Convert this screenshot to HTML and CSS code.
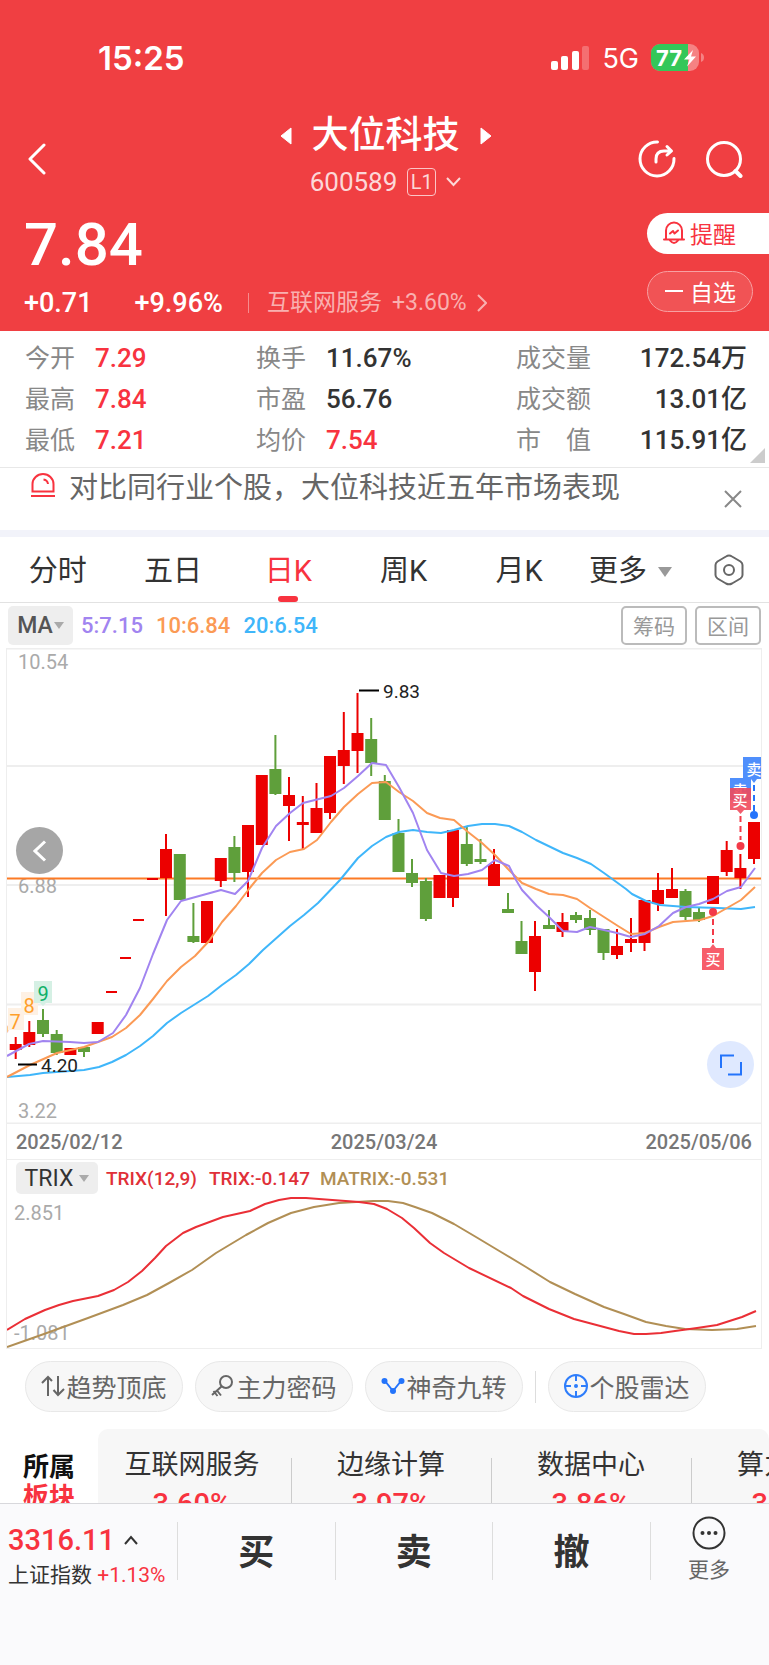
FILE: index.html
```html
<!DOCTYPE html>
<html lang="zh-CN">
<head>
  <meta charset="UTF-8">
  <meta name="viewport" content="width=device-width, initial-scale=1">
  <title>大位科技 600589</title>
  <link rel="stylesheet" href="styles.css">
</head>
<body>
  <main class="main">
    <header class="header">
      <div class="status">
        <span class="status-time">15:25</span>
        <div class="status-right">
          <svg class="signal" width="39" height="26" viewBox="0 0 39 26" fill="#fff">
            <rect x="0" y="16" width="7" height="9" rx="2"/>
            <rect x="10" y="11" width="7" height="14" rx="2"/>
            <rect x="21" y="6" width="7" height="19" rx="2"/>
            <rect x="31" y="1" width="7" height="24" rx="2" opacity=".25"/>
          </svg>
          <span class="network">5G</span>
          <svg width="54" height="28" viewBox="0 0 54 28">
            <defs><clipPath id="level"><rect x="0" y="0" width="37" height="28"/></clipPath></defs>
            <rect x="0" y="0" width="48" height="27" rx="9" fill="#f58283"/>
            <rect x="0" y="0" width="48" height="27" rx="9" fill="#34c759" clip-path="url(#level)"/>
            <path d="M50 9q3 1 3 4.500t-3 4.500z" fill="#f58283"/>
            <text class="battery-num" x="5" y="22">77</text>
            <path d="M42 6L33 15.500h5.500L36 22.500L45 12.500h-5z" fill="#fff"/>
          </svg>
        </div>
      </div>

      <nav class="navbar">
        <a class="back" href="#" aria-label="返回">
          <svg width="18" height="32" viewBox="0 0 18 32"><path d="M16 2L2 16l14 14" fill="none" stroke="#fff" stroke-width="3" stroke-linecap="round" stroke-linejoin="round"/></svg>
        </a>
        <div class="stock">
          <div class="stock-name">
            <svg width="12" height="18" viewBox="0 0 12 18"><path d="M11 1v16L1 9z" fill="#fff" stroke="#fff" stroke-linejoin="round"/></svg>
            <h1>大位科技</h1>
            <svg width="12" height="18" viewBox="0 0 12 18"><path d="M1 1v16L11 9z" fill="#fff" stroke="#fff" stroke-linejoin="round"/></svg>
          </div>
          <div class="stock-code">
            <span>600589</span>
            <span class="level">L1</span>
            <svg width="15" height="10" viewBox="0 0 15 10"><path d="M1 1l6.500 7L14 1" fill="none" stroke="#fcd8d8" stroke-width="2"/></svg>
          </div>
        </div>
        <div class="nav-icons">
          <a href="#" aria-label="分享">
            <svg width="38" height="38" viewBox="0 0 38 38" fill="none" stroke="#fff" stroke-width="3" stroke-linecap="round" stroke-linejoin="round">
              <path d="M19.500 2A17 17 0 1 0 36 18.500"/>
              <path d="M18 22v-3Q18 11 26 11h7M29 6.500l4.500 4.500L29 15"/>
            </svg>
          </a>
          <a href="#" aria-label="搜索">
            <svg width="38" height="38" viewBox="0 0 38 38" fill="none" stroke="#fff" stroke-width="3" stroke-linecap="round">
              <circle cx="19" cy="19" r="16.500"/>
              <path d="M30.500 31l5 5" stroke-width="4"/>
            </svg>
          </a>
        </div>
      </nav>

      <section class="quote">
        <div>
          <div class="price">7.84</div>
          <div class="change">
            <span class="change-num">+0.71</span>
            <span class="change-num">+9.96%</span>
            <a class="industry" href="#">
              <span>互联网服务</span>
              <span>+3.60%</span>
              <svg width="10" height="18" viewBox="0 0 10 18"><path d="M1 1l8 8-8 8" fill="none" stroke="#f9b0b0" stroke-width="2"/></svg>
            </a>
          </div>
        </div>
        <div class="quote-actions">
          <button class="remind" type="button">
            <svg width="22" height="24" viewBox="0 0 22 24" fill="none" stroke="#f8333f" stroke-width="2" stroke-linecap="round" stroke-linejoin="round">
              <path d="M1 18.500h20M3 18V9.500a8 8 0 0 1 16 0V18M7 19.500q4 5 8 0"/>
              <path d="M7 12.500l3-2.500 1.500 2.500L15 9.500"/>
            </svg>
            提醒
          </button>
          <button class="watch" type="button">
            <svg width="18" height="4" viewBox="0 0 18 4"><path d="M0 2h18" stroke="#fff" stroke-width="2"/></svg>
            自选
          </button>
        </div>
      </section>
    </header>

    <section class="stats">
      <dl>
        <dt>今开</dt><dd class="up">7.29</dd>
        <dt>最高</dt><dd class="up">7.84</dd>
        <dt>最低</dt><dd class="up">7.21</dd>
      </dl>
      <dl>
        <dt>换手</dt><dd>11.67%</dd>
        <dt>市盈</dt><dd>56.76</dd>
        <dt>均价</dt><dd class="up">7.54</dd>
      </dl>
      <dl class="stats-right">
        <dt>成交量</dt><dd>172.54万</dd>
        <dt>成交额</dt><dd>13.01亿</dd>
        <dt>市　值</dt><dd>115.91亿</dd>
      </dl>
    </section>

    <section class="notice">
      <svg class="notice-icon" width="24" height="24" viewBox="0 0 24 24" fill="none" stroke="#f8333f" stroke-width="2">
        <path d="M1.500 18.500V11a10.500 10 0 0 1 21 0v7.500zM0 23h24"/>
        <path d="M12.500 6.500q4 .5 4.500 4.500"/>
      </svg>
      <p>对比同行业个股，大位科技近五年市场表现</p>
      <button class="close" type="button" aria-label="关闭">
        <svg width="18" height="18" viewBox="0 0 18 18"><path d="M1 1l16 16M17 1L1 17" stroke="#888" stroke-width="2"/></svg>
      </button>
    </section>

    <nav class="tabs">
      <a href="#">分时</a>
      <a href="#">五日</a>
      <a class="on" href="#">日K</a>
      <a href="#">周K</a>
      <a href="#">月K</a>
      <a class="tab-more" href="#">更多<i class="caret"></i></a>
      <a class="setting" href="#" aria-label="设置">
        <svg width="30" height="32" viewBox="0 0 30 32" fill="none" stroke="#666" stroke-width="2" stroke-linejoin="round">
          <path d="M15 1.500q1.500 0 3 1l8.500 5Q28.500 9 28.500 11v10q0 2-2 3.500l-8.500 5q-3 1.500-6 0l-8.500-5Q1.500 23 1.500 21V11q0-2 2-3.500l8.500-5q1.500-1 3-1z"/>
          <circle cx="15" cy="16" r="5"/>
        </svg>
      </a>
    </nav>

    <section class="ma-bar">
      <button class="chip" type="button">MA<i class="caret"></i></button>
      <span class="ma5">5:7.15</span>
      <span class="ma10">10:6.84</span>
      <span class="ma20">20:6.54</span>
      <button class="outline" type="button">筹码</button>
      <button class="outline" type="button">区间</button>
    </section>

    <section class="chart">
      <div class="kline">
        <svg viewBox="7 648 754 476">
          <path class="grid" d="M7 648.500h754M7 766h754M7 885h754M7 1004.500h754M7 1123.500h754"/>
          <g class="axis">
            <text x="18" y="669">10.54</text>
            <text x="18" y="893">6.88</text>
            <text x="18" y="1118">3.22</text>
          </g>
          <path class="price-line" d="M7 878.500h754"/>

          <!-- 神奇九转 -->
          <g class="nine">
            <text x="4" y="1034" fill="#fcc98a">6</text>
            <rect x="8" y="1008" width="16" height="22" fill="#fef1e4"/>
            <text x="15" y="1029" fill="#ff9f2a">7</text>
            <rect x="21" y="992" width="17" height="23" fill="#fef1e4"/>
            <text x="29" y="1013" fill="#ff9f2a">8</text>
            <path d="M34 981h18v22h-6l-3 3-3-3h-6z" fill="#d5f0e4"/>
            <text x="43" y="1001" fill="#10b068">9</text>
          </g>

          <!-- 阳线 -->
          <path class="wick up-line" d="M15.700 1037V1059M29.300 1021V1047M166 834V916M220.800 858V887M248 825V897M289 777V841M302.800 796V849M316.500 783V833M330 756V819M343.800 712V784M357.500 693V773M453 830V907M494 849V886M535 921V991M562.500 913V937M617 929V959M631 918V952M644.500 900V951M658 873V911M672 868V898M726.700 841V876M740.400 854V889M754 822V864"/>
          <path class="body up-line" d="M15.700 1044V1050M29.300 1032V1045M70.400 1048V1055M97.700 1022V1034M166 849V878M207 901V943M220.800 858V881M248 825V872M261.800 775V845M289 795V806M302.800 822V825M316.500 808V833M330 756V813M343.800 750V766M357.500 733V751M439.500 875V898M453 830V898M494 864V886M535 936V972M562.500 922V932M617 946V955M631 939V943M644.500 900V943M658 890V904M672 889V898M713 876V904M726.700 850V872M740.400 868V878M754 822V859"/>
          <path class="limit up-line" d="M106 992h11M120 958h11M133 920h11M147 879h11"/>
          <!-- 阴线 -->
          <path class="wick down-line" d="M43 1009V1037M56.700 1030V1055M84 1048V1057M193.400 903V943M234.400 836V882M275.400 735V795M371.200 718V776M384.800 775V820M398.500 819V872M412 859V887M425.900 878V921M466.800 827V866M480.500 839V864M508 893V913M521.500 921V954M549 910V929M576 912V923M590 910V935M603.500 929V960M685.500 889V920M699 908V922"/>
          <path class="body down-line" d="M43 1020V1034M56.700 1034V1053M84 1047V1052M179.800 854V900M193.400 936V942M234.400 847V873M275.400 769V794M371.200 739V763M384.800 781V820M398.500 833V872M412 873V883M425.900 881V919M466.800 844V864M480.500 859V862M508 909V913M521.500 941V954M549 925V929M576 915V920M590 918V930M603.500 929V953M685.500 891V917M699 912V920"/>

          <polyline class="line" stroke="#3fb6fa" points="7,1077 30,1075 43,1073 84,1070 99,1067 112,1062 126,1055 140,1046 153,1036 167,1023 181,1013 208,996 222,985 236,975 249,964 263,950 290,926 304,915 318,903 340,880 358,858 372,846 386,837 399,832 413,830 427,832 441,833 454,830 468,826 482,824 495,824 509,826 522,832 536,840 563,853 577,858 591,864 604,873 626,889 632,894 646,901 660,905 686,907 718,908 741,909 755,907"/>
          <polyline class="line" stroke="#fb9a55" points="7,1077 30,1065 57,1053 84,1047 112,1037 126,1028 140,1015 153,999 167,981 181,967 195,956 209,941 222,922 236,906 249,889 262,873 276,860 290,852 304,849 317,840 331,822 344,807 358,794 372,783 386,782 399,792 413,801 427,813 440,818 454,820 468,832 482,843 495,855 508,869 522,883 536,889 549,894 563,895 577,899 590,908 604,917 618,926 631,934 645,933 659,927 673,922 700,920 713,916 727,908 741,900 755,887"/>
          <polyline class="line" stroke="#a184f0" points="7,1056 29,1044 43,1041 70,1042 84,1043 98,1042 113,1033 126,1015 140,988 153,954 167,920 181,901 221,890 235,894 248,881 262,848 276,826 290,813 303,803 331,796 344,788 358,776 372,763 386,765 399,787 413,813 427,850 441,873 454,876 468,874 482,870 495,860 509,866 516,880 522,890 537,906 549,917 563,931 577,932 590,927 604,930 617,933 631,937 645,934 659,926 673,913 686,907 699,904 713,899 727,891 741,887 755,868"/>

          <path class="mark" d="M359 690.500h20M18 1064.500h19"/>
          <text class="mark-text" x="383" y="698">9.83</text>
          <text class="mark-text" x="41" y="1072">4.20</text>

          <!-- 买卖点 -->
          <path class="dash" stroke="#2474fb" d="M754 785V811"/>
          <circle cx="754" cy="815" r="4" fill="#2474fb"/>
          <path d="M743 757h18v22h-4l-3 4-3-4h-8z" fill="#4f8ffc"/>
          <text class="trade" x="754" y="775">卖</text>
          <path d="M730 778h21v22h-21z" fill="#4f8ffc"/>
          <text class="trade" x="740" y="796">卖</text>
          <path d="M730 788h21v22h-7l-3.500 4-3.500-4h-7z" fill="#f04a5c" opacity=".9"/>
          <text class="trade" x="740" y="806">买</text>
          <path class="dash" stroke="#f33a48" d="M740.500 816V840"/>
          <circle cx="740.500" cy="846" r="4" fill="#f33a48"/>
          <circle cx="713" cy="912" r="4" fill="#f33a48"/>
          <path class="dash" stroke="#f33a48" d="M713 919V943"/>
          <path d="M702 948h8l3-4 3 4h8v22h-22z" fill="#f75d6a"/>
          <text class="trade" x="713" y="965">买</text>
        </svg>
        <button class="round prev" type="button" aria-label="向前">
          <svg width="14" height="22" viewBox="0 0 14 22"><path d="M12 1.500L2 11l10 9.500" fill="none" stroke="#fff" stroke-width="3"/></svg>
        </button>
        <button class="round full" type="button" aria-label="全屏">
          <svg width="22" height="22" viewBox="0 0 22 22"><path d="M1 14V1.500h13M21 8v12.500H8" fill="none" stroke="#2474fb" stroke-width="2"/></svg>
        </button>
      </div>

      <div class="dates">
        <span>2025/02/12</span>
        <span>2025/03/24</span>
        <span>2025/05/06</span>
      </div>

      <div class="trix-bar">
        <button class="chip chip-small" type="button">TRIX<i class="caret"></i></button>
        <span>TRIX(12,9)</span>
        <span class="trix-num">TRIX:-0.147</span>
        <span class="matrix">MATRIX:-0.531</span>
      </div>
      <svg class="trix" viewBox="7 1196 754 152">
        <g class="axis">
          <text x="14" y="1220">2.851</text>
          <text x="14" y="1340">-1.081</text>
        </g>
        <polyline class="line" stroke="#b18f55" points="7,1347 27,1340 44,1334 88,1318 123,1305 147,1295 169,1283 192,1270 216,1253 246,1235 268,1223 291,1213 314,1207 339,1203 356,1202 373,1201 388,1201 403,1203 415,1207 432,1213 454,1224 476,1237 501,1252 526,1267 550,1282 575,1294 604,1307 624,1314 646,1322 666,1326 685,1329 712,1330 737,1329 756,1326"/>
        <polyline class="line" stroke="#ea2f36" points="7,1330 25,1319 45,1310 59,1305 73,1301 98,1296 114,1290 128,1282 142,1271 155,1258 166,1246 183,1233 196,1227 223,1217 250,1211 265,1204 279,1200 291,1198 306,1198 319,1199 359,1202 374,1204 387,1209 402,1218 414,1228 430,1243 444,1253 469,1268 511,1288 523,1296 549,1309 574,1319 589,1323 619,1331 634,1334 646,1334 661,1333 675,1331 697,1328 717,1325 742,1317 756,1311"/>
      </svg>
    </section>

    <section class="tools">
      <button type="button">
        <svg width="24" height="22" viewBox="0 0 24 22" fill="none" stroke="#666" stroke-width="2">
          <path d="M7 21V2M1 8l6-6 4 4M17 1v18M12.500 15l4.500 5 6-6"/>
        </svg>趋势顶底
      </button>
      <button type="button">
        <svg width="24" height="24" viewBox="0 0 24 24" fill="none" stroke="#666" stroke-width="2">
          <circle cx="15" cy="8" r="6"/>
          <path d="M10.500 12.500L1 21M6 16.500l4 5M2.500 17l4 5"/>
        </svg>主力密码
      </button>
      <button type="button">
        <svg width="24" height="18" viewBox="0 0 24 18">
          <path d="M4 4l8 10 8-10" fill="none" stroke="#2474fb" stroke-width="2"/>
          <g fill="#2474fb"><circle cx="3.500" cy="4" r="3"/><circle cx="12" cy="14" r="3"/><circle cx="20.500" cy="4" r="3"/></g>
        </svg>神奇九转
      </button>
      <i class="tools-line"></i>
      <button type="button">
        <svg width="24" height="24" viewBox="0 0 24 24" fill="none" stroke="#2e7dfb" stroke-width="2">
          <circle cx="12" cy="12" r="11"/>
          <path d="M12 1v6M12 17v6M1 12h6M17 12h6"/>
          <circle cx="12" cy="12" r="2" fill="#2e7dfb" stroke="none"/>
        </svg>个股雷达
      </button>
    </section>

    <section class="sector">
      <h2>所属<br><em>板块</em></h2>
      <div class="sector-list">
        <a href="#">互联网服务<b>3.60%</b></a>
        <a href="#">边缘计算<b>3.97%</b></a>
        <a href="#">数据中心<b>3.86%</b></a>
        <a href="#">算力概念<b>3.21%</b></a>
      </div>
    </section>
  </main>

  <footer class="footer">
    <a class="index" href="#">
      <span class="index-num">3316.11
        <svg width="14" height="10" viewBox="0 0 14 10"><path d="M1 9l6-7 6 7" fill="none" stroke="#333" stroke-width="2"/></svg>
      </span>
      <span class="index-name">上证指数 <span class="up">+1.13%</span></span>
    </a>
    <button class="trade-btn" type="button">买</button>
    <button class="trade-btn" type="button">卖</button>
    <button class="trade-btn" type="button">撤</button>
    <a class="more" href="#">
      <svg width="34" height="34" viewBox="0 0 34 34">
        <circle cx="17" cy="17" r="15.500" fill="none" stroke="#333" stroke-width="2"/>
        <g fill="#333"><circle cx="10.500" cy="17" r="2"/><circle cx="17" cy="17" r="2"/><circle cx="23.500" cy="17" r="2"/></g>
      </svg>
      更多
    </a>
  </footer>
</body>
</html>
```

FILE: styles.css
```css
*{margin: 0;padding: 0;box-sizing: border-box}
body{
  display: flex;
  flex-direction: column;
  height: 100vh;
  background: #fff;
  color: #333;
  font-family: Roboto, "Noto Sans CJK SC", sans-serif;
}
a{
  color: inherit;
  text-decoration: none;
}
button{
  border: 0;
  background: none;
  color: inherit;
  font-family: inherit;
}
svg{
  display: block;
  flex-shrink: 0;
}
.main{
  flex: 1;
  min-height: 0;
  overflow: hidden;
}
.up{
  color: #f8333f;
}
.caret{
  display: inline-block;
  border: 5px solid transparent;
  border-top: 7px solid #aaa;
  border-bottom: 0;
}

/* header */
.header{
  background: #f03f42;
  color: #fff;
}
.status{
  display: flex;
  align-items: center;
  justify-content: space-between;
  height: 116px;
  padding: 0 64px 0 98px;
  font-family: Inter, sans-serif;
}
.status-time{
  font-size: 33px;
  font-weight: 600;
}
.status-right{
  display: flex;
  align-items: center;
  gap: 12px;
}
.network{
  font-size: 27px;
}
.battery-num{
  fill: #fff;
  font-size: 22px;
  font-weight: 700;
}
.navbar{
  display: grid;
  grid-template-columns: 1fr auto 1fr;
  height: 86px;
  padding: 0 26px 0 28px;
}
.back{
  align-self: center;
}
.nav-icons{
  display: flex;
  align-items: center;
  justify-content: flex-end;
  gap: 29px;
}
.stock-name{
  display: flex;
  align-items: center;
  justify-content: center;
  gap: 20px;
  height: 40px;
}
.stock-name h1{
  font-size: 37px;
  font-weight: 500;
  line-height: 44px;
}
.stock-code{
  display: flex;
  align-items: center;
  justify-content: center;
  gap: 10px;
  margin-top: 12px;
  color: #fcd8d8;
  font-size: 26px;
  line-height: 28px;
}
.level{
  width: 29px;
  border: 1px solid #fbc5c6;
  border-radius: 4px;
  font-size: 20px;
  line-height: 26px;
  text-align: center;
}
.quote{
  display: flex;
  justify-content: space-between;
  height: 129px;
}
.price{
  padding: 11px 0 0 24px;
  font-size: 60px;
  font-weight: 500;
  line-height: 64px;
}
.change{
  display: flex;
  align-items: center;
  margin-top: 12px;
  padding-left: 24px;
  line-height: 28px;
}
.change-num{
  margin-right: 42px;
  font-size: 27px;
  font-weight: 500;
}
.change-num + .change-num{
  margin-right: 25px;
}
.industry{
  display: flex;
  align-items: center;
  gap: 10px;
  color: #f9b0b0;
  font-size: 23px;
}
.industry::before{
  content: "";
  width: 1px;
  height: 20px;
  margin-right: 8px;
  background: #f68c8e;
}
.quote-actions{
  display: flex;
  flex-direction: column;
  gap: 17px;
  padding-top: 11px;
}
.remind,
.watch{
  display: flex;
  align-items: center;
  height: 41px;
  padding-bottom: 2px;
  font-size: 23px;
}
.remind{
  gap: 5px;
  width: 122px;
  padding-left: 16px;
  border-radius: 21px 0 0 21px;
  background: #fff;
  color: #f8333f;
}
.watch{
  gap: 7px;
  width: 106px;
  padding-left: 17px;
  border: 1px solid #f7a0a2;
  border-radius: 21px;
  background: #f15355;
}

/* 行情数据 */
.stats{
  position: relative;
  display: grid;
  grid-template-columns: 32fr 36fr 32fr;
  padding: 7px 22px 6px 25px;
  border-bottom: 1px solid #e8e8e8;
  font-size: 26px;
  line-height: 41px;
}
.stats::after{
  content: "";
  position: absolute;
  right: 4px;
  bottom: 4px;
  border-bottom: 15px solid #ccc;
  border-left: 15px solid transparent;
}
.stats dl{
  display: grid;
  grid-template-columns: auto 1fr;
  column-gap: 20px;
}
.stats dt{
  color: #888;
  font-size: 25px;
}
.stats dd{
  font-weight: 500;
}
.stats-right dd{
  text-align: right;
}

/* notice */
.notice{
  display: flex;
  align-items: flex-start;
  height: 69px;
  padding: 0 27px 0 31px;
  border-bottom: 7px solid #f2f3fa;
}
.notice-icon{
  margin-top: 5px;
}
.notice p{
  flex: 1;
  margin-left: 14px;
  color: #666;
  font-size: 29px;
  line-height: 40px;
  white-space: nowrap;
}
.close{
  margin-top: 22px;
}

/* tabs */
.tabs{
  display: flex;
  height: 66px;
  border-bottom: 1px solid #e2e2e2;
  font-size: 29px;
  line-height: 68px;
}
.tabs a{
  position: relative;
  width: 15%;
  text-align: center;
  white-space: nowrap;
}
.tabs .tab-more{
  width: 14%;
}
.tabs .caret{
  margin-left: 11px;
  border-width: 10px 7px 0;
  border-top-color: #999;
  vertical-align: 4px;
}
.tabs .on{
  color: #f8333f;
}
.tabs .on::after{
  content: "";
  position: absolute;
  bottom: 0;
  left: 50%;
  width: 20px;
  height: 6px;
  margin-left: -10px;
  border-radius: 3px;
  background: #f8333f;
}
.tabs .setting{
  display: flex;
  flex: 1;
  align-items: center;
  justify-content: center;
  padding-left: 4px;
}

/* MA */
.ma-bar{
  display: flex;
  align-items: center;
  gap: 8px;
  height: 45px;
  padding: 0 8px;
  font-size: 22px;
  font-weight: 500;
}
.chip{
  display: flex;
  align-items: center;
  justify-content: center;
  gap: 1px;
  width: 65px;
  height: 39px;
  border-radius: 5px;
  background: #eee;
  color: #555;
  font-size: 23px;
  font-weight: 500;
}
.ma5{color: #a184f0}
.ma10{
  margin-left: 5px;
  color: #fb9a55;
}
.ma20{
  flex: 1;
  margin-left: 5px;
  color: #3fb6fa;
}
.outline{
  width: 66px;
  height: 39px;
  padding-bottom: 2px;
  border: 2px solid #bbb;
  border-radius: 5px;
  color: #999;
  font-size: 21px;
}

/* chart */
.chart{
  margin: 0 7px 0 6px;
  border: 1px solid #eee;
  border-width: 0 1px 1px;
}
.chart > svg,
.kline > svg{
  width: 100%;
  height: auto;
}
.kline{
  position: relative;
}
.grid{
  stroke: #eee;
  stroke-width: 2;
}
.axis{
  fill: #aaa;
  font-size: 20px;
}
.price-line{
  stroke: #fc7a25;
  stroke-width: 2;
}
.nine{
  font-size: 20px;
  text-anchor: middle;
}
.wick{stroke-width: 2}
.body{stroke-width: 12}
.limit{stroke-width: 2}
.up-line{stroke: #ec0000}
.down-line{stroke: #5f9f3b}
.line{
  fill: none;
  stroke-width: 2;
  stroke-linejoin: round;
}
.mark{
  stroke: #000;
  stroke-width: 2;
}
.mark-text{
  fill: #222;
  font-size: 19px;
}
.dash{
  stroke-width: 2;
  stroke-dasharray: 6 4;
}
.trade{
  fill: #fff;
  font-size: 15px;
  font-weight: 500;
  text-anchor: middle;
}
.round{
  position: absolute;
  display: flex;
  align-items: center;
  justify-content: center;
  width: 47px;
  height: 47px;
  border-radius: 50%;
}
.prev{
  left: 9px;
  top: 179px;
  background: #a6a6a6;
}
.full{
  right: 7px;
  bottom: 36px;
  background: #dfe9ff;
}
.dates{
  display: flex;
  align-items: center;
  justify-content: space-between;
  height: 36px;
  padding: 0 9px;
  border-bottom: 1px solid #eee;
  color: #777;
  font-size: 20px;
  font-weight: 500;
}
.trix-bar{
  display: flex;
  align-items: center;
  gap: 8px;
  height: 36px;
  padding-left: 9px;
  color: #e03038;
  font-size: 19px;
  font-weight: 500;
}
.chip-small{
  gap: 6px;
  width: 82px;
  height: 32px;
  color: #333;
  font-weight: 400;
}
.trix-num{
  margin-left: 4px;
}
.matrix{
  margin-left: 2px;
  color: #b18f55;
}

/* tools */
.tools{
  display: flex;
  align-items: center;
  gap: 12px;
  padding: 12px 25px 17px;
}
.tools button{
  display: flex;
  align-items: center;
  justify-content: center;
  gap: 1px;
  width: 158px;
  height: 51px;
  padding-bottom: 2px;
  border: 1px solid #e8e8e8;
  border-radius: 26px;
  background: #f7f7f7;
  color: #666;
  font-size: 25px;
  white-space: nowrap;
}
.tools-line{
  width: 1px;
  height: 32px;
  background: #ddd;
}

/* 所属板块 */
.sector{
  display: flex;
}
.sector h2{
  width: 98px;
  padding-top: 23px;
  flex-shrink: 0;
  color: #111;
  font-size: 26px;
  line-height: 30px;
  text-align: center;
}
.sector em{
  color: #f8333f;
  font-style: normal;
}
.sector-list{
  display: flex;
  flex: 1;
  min-width: 0;
  overflow: hidden;
  border-radius: 10px;
  background: #f7f7f7;
}
.sector-list a{
  position: relative;
  flex: 0 0 200px;
  padding-top: 16px;
  padding-right: 2px;
  font-size: 27px;
  line-height: 40px;
  text-align: center;
}
.sector-list a:first-child{
  flex-basis: 194px;
  padding-right: 6px;
}
.sector-list a::after{
  content: "";
  position: absolute;
  right: 0;
  top: 29px;
  bottom: 0;
  width: 1px;
  background: #ccc;
}
.sector-list b{
  display: block;
  color: #f8333f;
  font-size: 29px;
  font-weight: 500;
  line-height: 38px;
}

/* footer */
.footer{
  display: flex;
  height: 162px;
  padding-top: 18px;
  border-top: 1px solid #d8d8dc;
  background: #fafafc;
}
.index{
  width: 23%;
  padding-left: 8px;
  white-space: nowrap;
}
.index-num{
  display: flex;
  align-items: center;
  gap: 9px;
  color: #f8333f;
  font-size: 29px;
  font-weight: 500;
  line-height: 36px;
}
.index-name{
  font-size: 21px;
  line-height: 34px;
}
.trade-btn{
  width: 20.5%;
  height: 58px;
  padding-bottom: 4px;
  border-left: 1px solid #ddd;
  font-size: 36px;
  font-weight: 700;
}
.more{
  display: flex;
  flex: 1;
  flex-direction: column;
  align-items: center;
  height: 58px;
  padding-right: 2px;
  border-left: 1px solid #ddd;
  color: #666;
  font-size: 21px;
  line-height: 30px;
}
.more svg{
  margin-top: -6px;
  margin-bottom: 5px;
}
```
